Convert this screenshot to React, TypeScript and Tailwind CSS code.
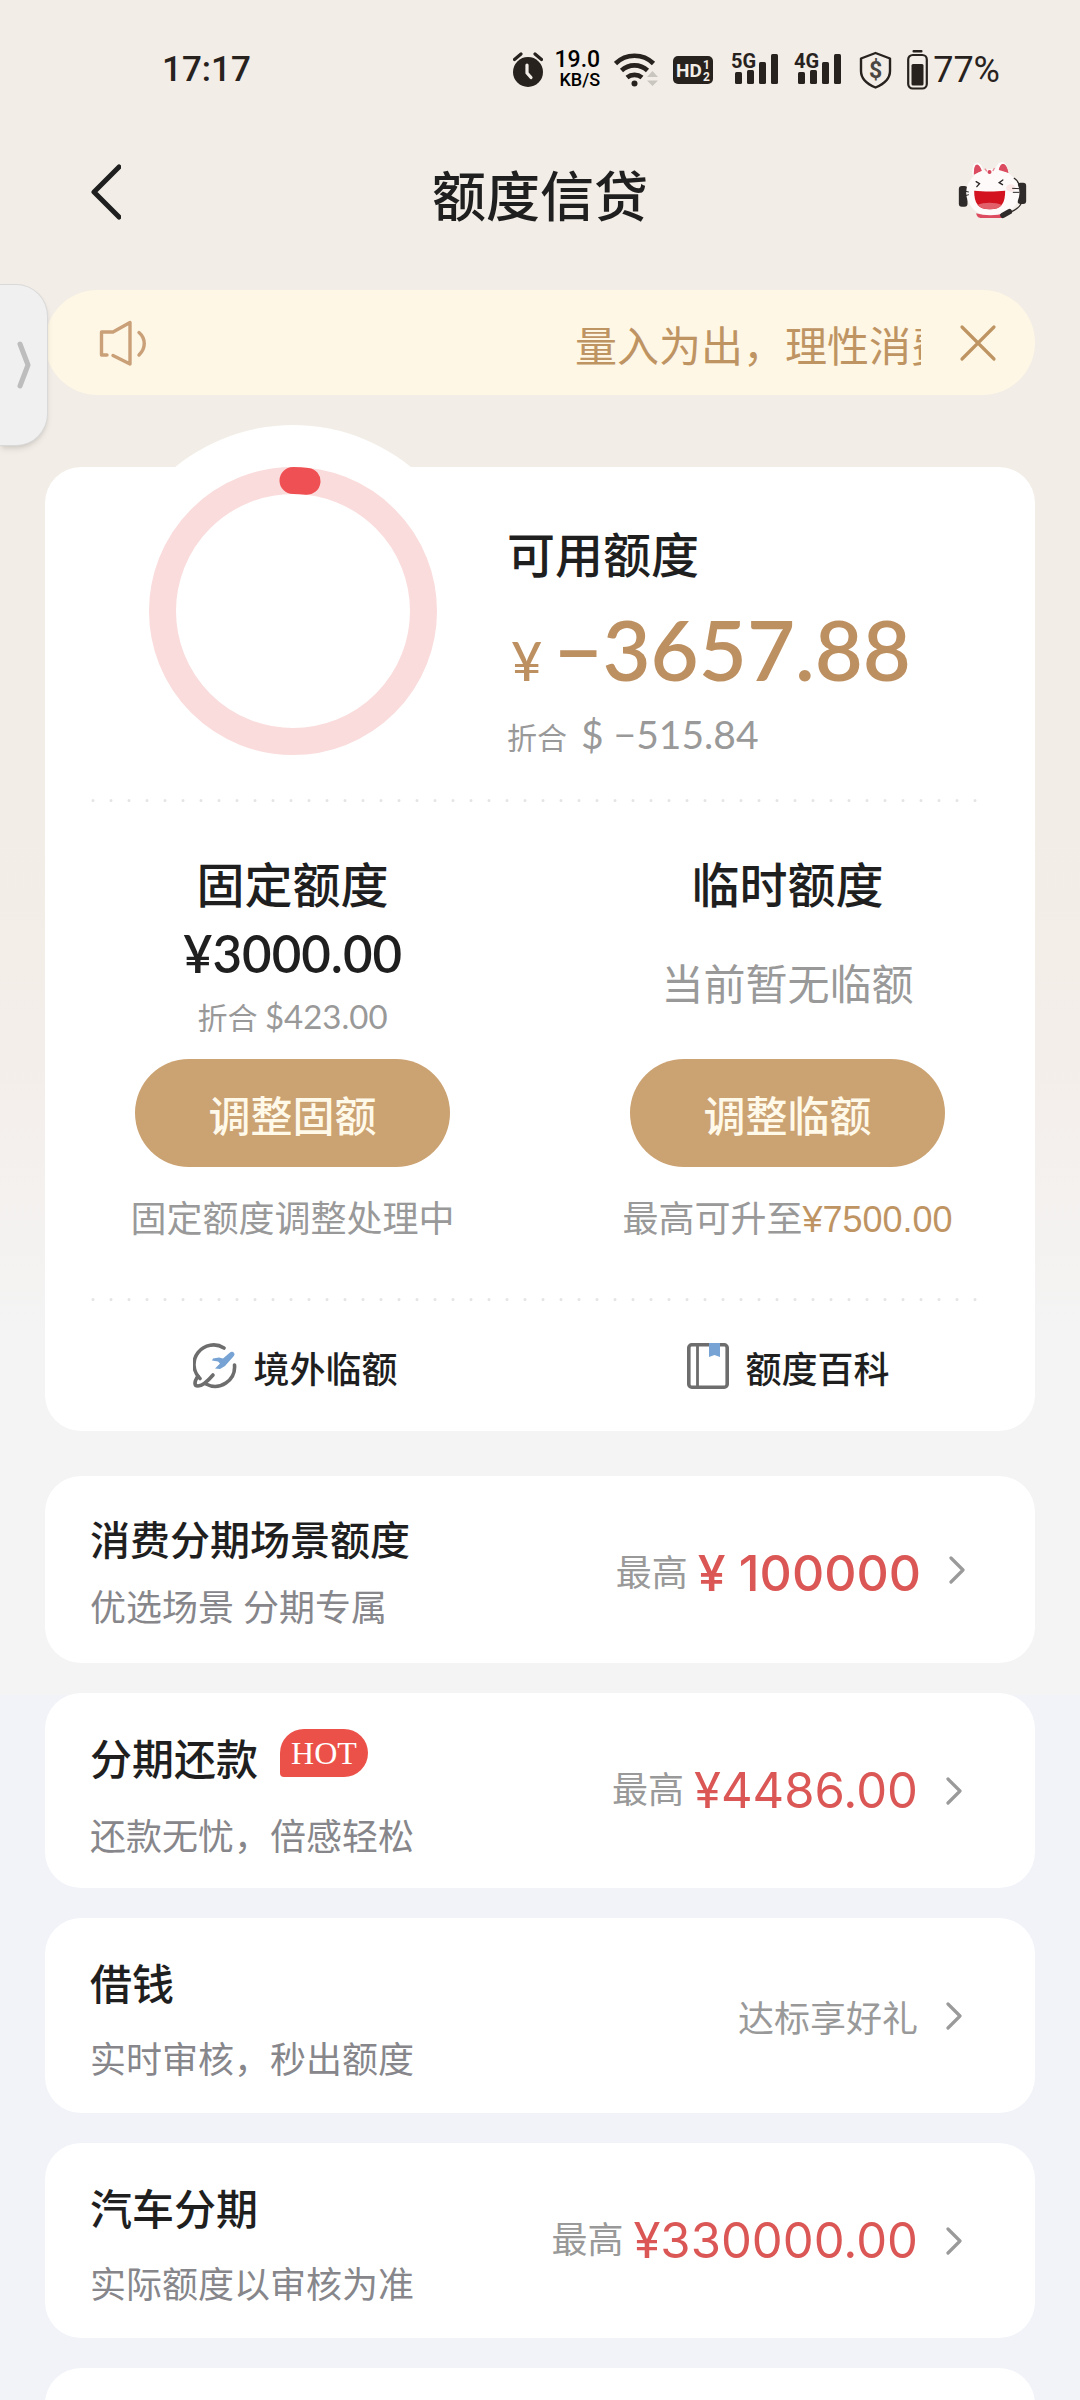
import type { ReactNode } from "react";
import clsx from "clsx";

interface Product {
  title: string;
  desc: string;
  amount?: string;
  note?: string;
  hot?: boolean;
  featured?: boolean;
}

const products: Product[] = [
  { title: "消费分期场景额度", desc: "优选场景 分期专属", amount: "¥ 100000", featured: true },
  { title: "分期还款", desc: "还款无忧，倍感轻松", amount: "¥4486.00", hot: true },
  { title: "借钱", desc: "实时审核，秒出额度", note: "达标享好礼" },
  { title: "汽车分期", desc: "实际额度以审核为准", amount: "¥330000.00" },
];

function SignalIcon({ label }: { label: string }) {
  return (
    <svg width="49" height="40" viewBox="0 0 49 40" fill="#28221f" aria-label={label}>
      <text x="0" y="18" fontSize="20" fontWeight="700" fontFamily="'Roboto', sans-serif">
        {label}
      </text>
      <rect x="4" y="22" width="7" height="12" rx="1.5" />
      <rect x="16" y="20" width="7" height="14" rx="1.5" />
      <rect x="28" y="12" width="7" height="22" rx="1.5" />
      <rect x="40" y="4" width="7" height="30" rx="1.5" />
    </svg>
  );
}

function StatusBar() {
  return (
    <div className="flex h-[140px] items-center justify-between pr-20 pl-[162px] font-['Roboto','Noto_Sans_CJK_SC',sans-serif] text-[#28221f]">
      <span className="text-[35px] font-medium">17:17</span>
      <div className="flex items-center gap-[14px]">
        <svg width="30" height="36" viewBox="0 0 30 36">
          <circle cx="15" cy="20" r="15" fill="#28221f" />
          <path d="M1.5 7.5 8 2M28.5 7.5 22 2" stroke="#28221f" strokeWidth="3.2" strokeLinecap="round" />
          <path d="M14 13v8l4 4.5" fill="none" stroke="#f2ede6" strokeWidth="3.2" strokeLinecap="round" />
        </svg>
        <div className="flex w-[43px] flex-col items-end text-black">
          <span className="text-[23px] leading-[20px] font-medium">19.0</span>
          <span className="text-[18px] leading-[20px] font-medium">KB/S</span>
        </div>
        <svg width="45" height="36" viewBox="0 0 45 36" fill="none" stroke="#28221f" strokeWidth="4.6">
          <path d="M1.5 11.5a27 27 0 0 1 38 0" />
          <path d="M7.5 18.5a19 19 0 0 1 26 0" />
          <path d="M13 25.500a12 12 0 0 1 15 0" />
          <circle cx="20.5" cy="31.5" r="3" fill="#28221f" stroke="none" />
          <path d="m38.5 19 5.5 6H33zM38.5 34l5.5-5.5H33z" fill="#c9c5bf" stroke="none" />
        </svg>
        <svg width="44" height="28" viewBox="0 0 44 28">
          <rect width="40" height="28" rx="5" fill="#28221f" />
          <g fill="#f2ede6" fontFamily="'Roboto', sans-serif" fontWeight="700">
            <text x="3" y="21" fontSize="19">HD</text>
            <text x="30" y="13" fontSize="12">1</text>
            <text x="30" y="25" fontSize="12">2</text>
          </g>
        </svg>
        <SignalIcon label="5G" />
        <SignalIcon label="4G" />
        <svg width="36" height="40" viewBox="0 0 36 40">
          <path
            d="M18.5 3 33 8.5V21c0 7-6 13-14.5 16.5C10 34 4 28 4 21V8.5z"
            fill="none"
            stroke="#28221f"
            strokeWidth="2.4"
            strokeLinejoin="round"
          />
          <text x="18.5" y="28" textAnchor="middle" fontSize="23" fontWeight="700" fontFamily="'Roboto', sans-serif" fill="#4a4642">
            $
          </text>
        </svg>
        <div className="flex items-center gap-[5px]">
          <svg width="21" height="40" viewBox="0 0 21 40" fill="#28221f">
            <rect x="5.5" y="0" width="10" height="2.5" rx="1" />
            <rect x="1.2" y="5" width="18.6" height="33.5" rx="4.5" fill="none" stroke="#28221f" strokeWidth="2.2" />
            <rect x="4.5" y="14" width="12" height="21.5" rx="1.5" />
          </svg>
          <span className="text-[36px]">77%</span>
        </div>
      </div>
    </div>
  );
}

function Mascot() {
  return (
    <svg width="69" height="60" viewBox="116 58 206 180">
      <rect x="118" y="136" width="26" height="62" rx="9" fill="#302b2b" />
      <rect x="294" y="126" width="26" height="64" rx="9" fill="#302b2b" />
      <path d="M158 104c0-24 4-38 14-38s15 8 20 22h34c5-14 11-24 22-24s18 18 20 42z" fill="#fdfaf9" />
      <path d="M163 102c0-18 3-30 9-30s12 8 14 20zM238 90c2-10 6-20 13-20s13 12 16 27z" fill="#dc4c61" />
      <ellipse cx="220" cy="156" rx="80" ry="72" fill="#fdfaf9" />
      <path d="M164 98c0-16 3-26 8-26s12 8 15 18zM238 88c2-10 6-18 13-18s13 12 15 26z" fill="#dc4c61" />
      <circle cx="210" cy="94" r="6" fill="#d6465b" />
      <path d="m196 84 6 8M225 82l-5 9" stroke="#e88c98" strokeWidth="4" />
      <ellipse cx="274" cy="142" rx="14" ry="11" fill="#fbe7e6" />
      <path d="m170 123 10 6-8 9M250 118l-11 8 10 6" fill="none" stroke="#2a2526" strokeWidth="4" strokeLinecap="round" />
      <path d="M164 150c28 3 64 3 93 0 0 36-10 56-46 56s-47-20-47-56z" fill="#d3131f" />
      <path d="M174 193c18-9 54-9 73 0-8 9-20 13-36 13s-28-4-37-13z" fill="#e2606a" />
      <path d="M170 218c24 8 62 8 84 0v6c0 5-3 8-8 8h-63c-8 0-12-6-13-14z" fill="#dd4b60" />
      <path d="m132 151 16 3M134 166l14-4M278 143l22 1M280 155l20 0" stroke="#302b2b" strokeWidth="3" />
      <path d="M283 112c10 6 16 14 18 30M306 186c-4 12-14 20-32 28" fill="none" stroke="#302b2b" strokeWidth="3.5" />
      <path d="m250 224 20-11" stroke="#302b2b" strokeWidth="16" strokeLinecap="round" />
    </svg>
  );
}

function Header() {
  return (
    <header className="grid h-[100px] grid-cols-[1fr_auto_1fr] items-center px-[53px]">
      <button type="button" aria-label="返回" className="justify-self-start pt-1 pl-9">
        <svg width="32" height="58" viewBox="0 0 32 58" fill="none" stroke="#1f1f1f" strokeWidth="5" strokeLinecap="round" strokeLinejoin="round">
          <path d="M30 4 5 29l25 25" />
        </svg>
      </button>
      <h1 className="pt-[18px] text-[54px] leading-[70px] font-medium">额度信贷</h1>
      <button type="button" aria-label="客服" className="justify-self-end">
        <Mascot />
      </button>
    </header>
  );
}

function Notice() {
  return (
    <div className="mx-[45px] mt-[50px] flex h-[105px] items-center rounded-full bg-[#fef7e6] pr-[38px] pl-[54px] text-[#bf9463]">
      <svg width="48" height="48" viewBox="0 0 48 48" fill="none" stroke="#c9a078" strokeWidth="3.4" strokeLinecap="round" strokeLinejoin="round">
        <path d="M8 36H2.5V13H14L31 3.5V45L14 36.5" />
        <path d="M40 13.5c7 6 7 16 0 22.5" />
      </svg>
      <div className="mr-[38px] flex-1 overflow-hidden pt-2.5">
        <p className="ml-auto w-[346px] text-[42px] leading-[60px] whitespace-nowrap">量入为出，理性消费</p>
      </div>
      <button type="button" aria-label="关闭">
        <svg width="38" height="38" viewBox="0 0 38 38" stroke="#bf9463" strokeWidth="3.2" strokeLinecap="round">
          <path d="m3 3 32 32M35 3 3 35" />
        </svg>
      </button>
    </div>
  );
}

function Divider() {
  return (
    <svg className="mr-[58px] ml-[46px] block h-[3px] w-auto self-stretch" aria-hidden="true">
      <line x1="2" y1="1.5" x2="100%" y2="1.5" stroke="#e4e4e4" strokeWidth="3" strokeLinecap="round" strokeDasharray="0 18" />
    </svg>
  );
}

function LimitColumn({ title, action, note, children }: { title: string; action: string; note: ReactNode; children: ReactNode }) {
  return (
    <div className="flex flex-col items-center">
      <h2 className="text-[48px] leading-[60px] font-medium">{title}</h2>
      <div className="flex h-[142px] flex-col items-center justify-center">{children}</div>
      <button type="button" className="h-[108px] w-[315px] rounded-full bg-[#cba272] pt-2 text-[42px] font-medium text-[#fff9ea]">
        {action}
      </button>
      <p className="mt-7 text-[36px] leading-[50px] text-[#999]">{note}</p>
    </div>
  );
}

function LimitCard() {
  return (
    <section className="relative mx-[45px] mt-[72px] flex flex-col rounded-[36px] bg-white">
      <div className="absolute -top-[42px] left-[62px] size-[372px] rounded-full bg-white" />
      <div className="relative flex h-[332px] gap-[70px] pl-[104px]">
        <svg width="288" height="288" viewBox="0 0 288 288" fill="none" strokeWidth="27">
          <circle cx="144" cy="144" r="130.5" stroke="#fadcdc" />
          <path d="M144 13.5a130.5 130.5 0 0 1 14 .8" stroke="#ef5053" strokeLinecap="round" />
        </svg>
        <div className="pt-[60px]">
          <h2 className="text-[48px] leading-[60px] font-medium">可用额度</h2>
          <p className="mt-3 flex items-baseline gap-3 pl-1 font-['Lato','Noto_Sans_CJK_SC',sans-serif] text-[#bd9062]">
            <span className="text-[54px] font-medium">¥</span>
            <strong className="text-[83px] leading-[100px] font-semibold">−3657.88</strong>
          </p>
          <p className="mt-2 flex items-baseline gap-3.5 text-[30px] leading-[50px] text-[#999]">
            折合
            <span className="font-['Lato','Noto_Sans_CJK_SC',sans-serif] text-[39px]">$ −515.84</span>
          </p>
        </div>
      </div>
      <Divider />
      <div className="mt-[55px] mb-[53px] grid grid-cols-2">
        <LimitColumn title="固定额度" action="调整固额" note="固定额度调整处理中">
          <p className="font-['Lato','Noto_Sans_CJK_SC',sans-serif] text-[51px] leading-[60px] font-semibold">¥3000.00</p>
          <p className="mt-3 mb-3.5 text-[30px] leading-[40px] text-[#999]">
            折合 <span className="font-['Lato','Noto_Sans_CJK_SC',sans-serif] text-[33px]">$423.00</span>
          </p>
        </LimitColumn>
        <LimitColumn
          title="临时额度"
          action="调整临额"
          note={
            <>
              最高可升至<span className="font-['Liberation_Sans','Noto_Sans_CJK_SC',sans-serif] text-[#bf9463]">¥7500.00</span>
            </>
          }
        >
          <p className="pb-1.5 text-[42px] text-[#999]">当前暂无临额</p>
        </LimitColumn>
      </div>
      <Divider />
      <nav className="grid h-[130px] grid-cols-2 pl-1 text-[36px] font-medium">
        <a href="#overseas" className="flex items-center justify-center gap-4">
          <svg width="44" height="46" viewBox="0 0 44 46" fill="none" stroke="#6d6d6d" strokeWidth="3.6" strokeLinecap="round">
            <path d="M31 5A19.5 19.5 0 0 0 7 35.5" />
            <path d="M41.5 22A19.5 19.5 0 0 1 13 41" />
            <path d="M5 33C1 39 1 43 5 43c4 0 9-4 15-11" />
            <path d="M40 9c2 1 2 3 0 5l-8 9-5 3-5-.5 5-5-2-2-6-1 1-2 6-1 4 1 7-6c1-1 2-1 3-.5z" fill="#76a3d3" stroke="none" />
          </svg>
          <span className="pt-2.5">境外临额</span>
        </a>
        <a href="#wiki" className="flex items-center justify-center gap-4">
          <svg width="42" height="46" viewBox="0 0 42 46" fill="none" stroke="#6d6d6d" strokeWidth="3.6">
            <rect x="1.8" y="1.8" width="38.4" height="42.4" rx="3" />
            <path d="M10.5 2v42" strokeWidth="2.8" />
            <path d="M22 0h11v14l-5.5-2L22 14z" fill="#76a3d3" stroke="none" />
          </svg>
          <span className="pt-2.5">额度百科</span>
        </a>
      </nav>
    </section>
  );
}

function ProductCard({ title, desc, amount, note, hot, featured }: Product) {
  return (
    <a
      href="#product"
      className={clsx(
        "mx-[45px] flex items-center justify-between rounded-[36px] bg-white pl-[45px]",
        featured ? "h-[187px] pr-[70px]" : "h-[195px] pr-[73px]",
      )}
    >
      <div className={featured ? "pt-1.5" : "pt-2.5"}>
        <h3 className={clsx("flex items-center leading-[60px] font-medium", featured ? "text-[40px]" : "text-[42px]")}>
          {title}
          {hot && (
            <span className="mb-4 ml-[22px] rounded-[24px] rounded-bl-[4px] bg-[#ec5149] px-[11px] font-['Liberation_Serif',serif] text-[32px] leading-[48px] font-normal text-white">
              HOT
            </span>
          )}
        </h3>
        <p className={clsx("text-[36px] leading-[50px] text-[#86868b]", featured ? "mt-3" : "mt-5")}>{desc}</p>
      </div>
      <div className="flex items-center">
        {amount ? (
          <p className={clsx("flex items-center gap-[10px] text-[36px] text-[#999]", featured && "pt-2")}>
            最高
            <span
              className={clsx(
                "font-['Inter','Noto_Sans_CJK_SC',sans-serif] text-[#db5756]",
                featured ? "text-[50px] font-medium" : "text-[49px]",
              )}
            >
              {amount}
            </span>
          </p>
        ) : (
          <p className="pt-2 text-[36px] text-[#999]">{note}</p>
        )}
        <svg className="ml-[28px]" width="16" height="28" viewBox="0 0 16 28" fill="none" stroke="#9a9a9a" strokeWidth="3.2" strokeLinecap="round" strokeLinejoin="round">
          <path d="m2 2 12 12L2 26" />
        </svg>
      </div>
    </a>
  );
}

export default function App() {
  return (
    <div className="relative h-screen overflow-hidden bg-[#f1f3f8] bg-[linear-gradient(#f2ede6_0px,#f2ede6_800px,#f4eeea_1060px,#f4f4f4_1330px)] bg-[length:100%_1695px] bg-no-repeat font-['Roboto','Noto_Sans_CJK_SC',sans-serif] text-[#1f1f1f]">
      <StatusBar />
      <Header />
      <Notice />
      {/* Side drawer handle */}
      <button
        type="button"
        aria-label="展开"
        className="absolute top-[284px] left-0 flex h-[162px] w-12 items-center justify-end rounded-r-[32px] border border-l-0 border-[#d9d9d9] bg-[#f0f0f0] pr-4 shadow-md"
      >
        <svg width="14" height="48" viewBox="0 0 14 48" fill="none" stroke="#bdbdbd" strokeWidth="5" strokeLinecap="round" strokeLinejoin="round">
          <path d="m3 3 8 21-8 21" />
        </svg>
      </button>
      <LimitCard />
      <main className="mt-[45px] flex flex-col gap-[30px]">
        {products.map((product) => (
          <ProductCard key={product.title} {...product} />
        ))}
        <div className="mx-[45px] h-[195px] rounded-[36px] bg-white" />
      </main>
    </div>
  );
}
